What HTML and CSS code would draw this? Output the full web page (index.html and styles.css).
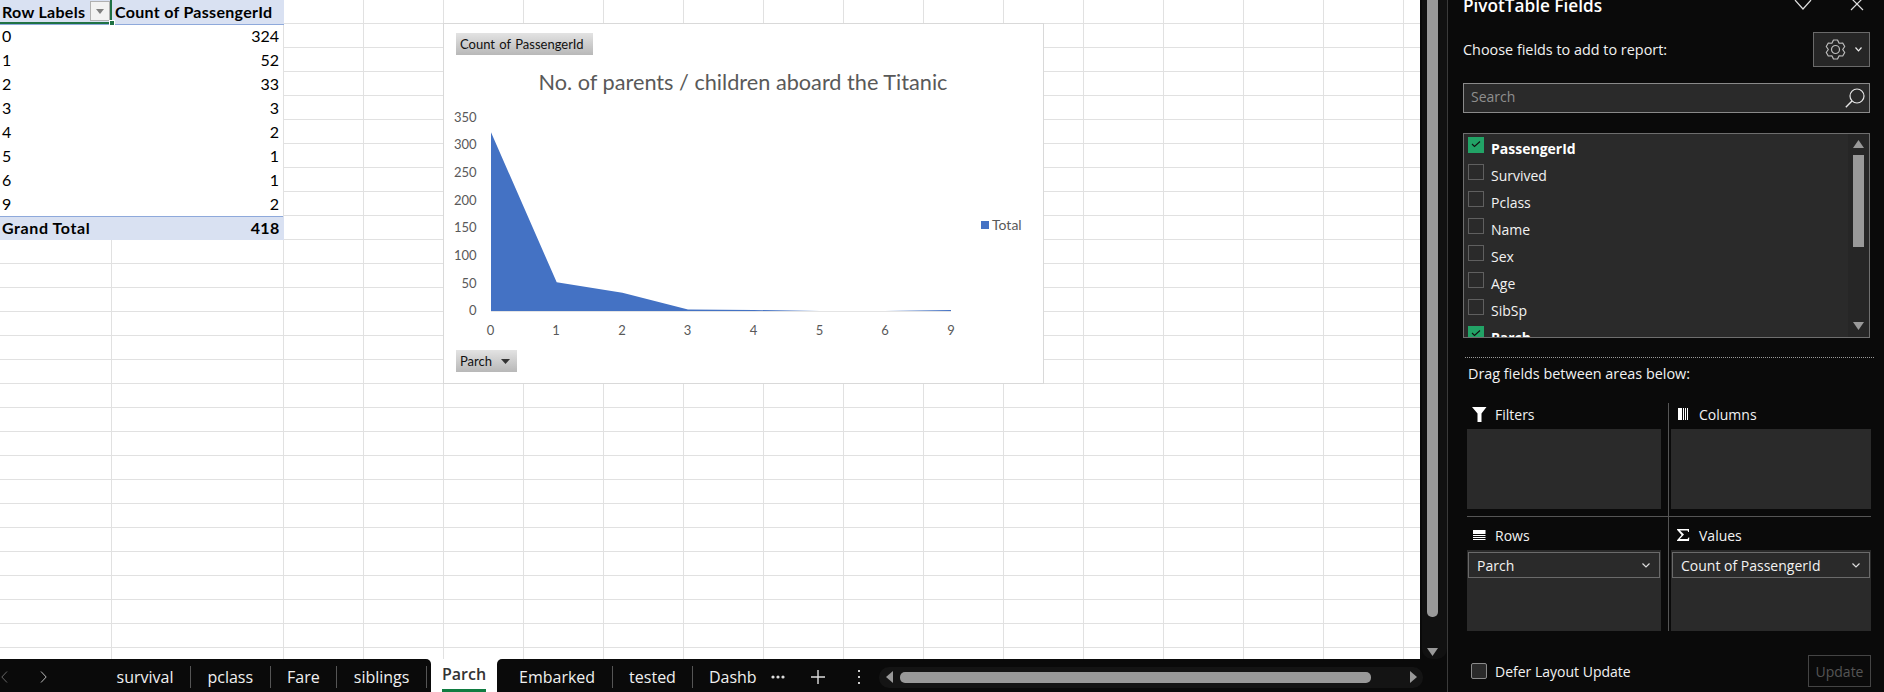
FILE: index.html
```html
<!DOCTYPE html>
<html lang="en">
<head>
<meta charset="utf-8">
<title>PivotTable - Parch</title>
<link rel="stylesheet" href="styles.css">
</head>
<body>
<div class="app">
  <div class="main">
    <div class="work">
      <div class="sheet">
        <table class="pivot">
          <tr class="head"><th class="c1">Row Labels<span class="filter"><svg width="8" height="5" viewBox="0 0 8 5"><path d="M0 0h8L4 5z" fill="#7f7f7f"/></svg></span><span class="handle"></span></th><th class="c2">Count of PassengerId</th></tr>
          <tr><td class="c1">0</td><td class="c2">324</td></tr>
          <tr><td class="c1">1</td><td class="c2">52</td></tr>
          <tr><td class="c1">2</td><td class="c2">33</td></tr>
          <tr><td class="c1">3</td><td class="c2">3</td></tr>
          <tr><td class="c1">4</td><td class="c2">2</td></tr>
          <tr><td class="c1">5</td><td class="c2">1</td></tr>
          <tr><td class="c1">6</td><td class="c2">1</td></tr>
          <tr><td class="c1">9</td><td class="c2">2</td></tr>
          <tr class="total"><td class="c1">Grand Total</td><td class="c2">418</td></tr>
        </table>
        <div class="chart">
          <span class="chip chip-count">Count of PassengerId</span>
          <svg class="plot" width="600" height="359" viewBox="0 0 600 359">
            <text class="title" x="299" y="66" text-anchor="middle">No. of parents / children aboard the Titanic</text>
            <g class="ylab" text-anchor="end">
              <text x="32.500" y="98">350</text><text x="32.500" y="125">300</text><text x="32.500" y="153">250</text><text x="32.500" y="181">200</text><text x="32.500" y="208">150</text><text x="32.500" y="236">100</text><text x="32.500" y="264">50</text><text x="32.500" y="291">0</text>
            </g>
            <path d="M47 287V108.300L112.700 258.300 178.400 268.800 244 285.600 309.800 286 375.500 287 441 287 507 285.900V287Z" fill="#4472c4"/>
            <path d="M47 287.500H507" stroke="#e4e4e4" fill="none"/>
            <g class="ylab" text-anchor="middle">
              <text x="46.500" y="311">0</text><text x="112" y="311">1</text><text x="178" y="311">2</text><text x="243.500" y="311">3</text><text x="309.500" y="311">4</text><text x="375.500" y="311">5</text><text x="441" y="311">6</text><text x="507" y="311">9</text>
            </g>
            <rect x="537" y="197" width="8" height="8" fill="#4472c4"/>
            <text class="ylab legend" x="548" y="206">Total</text>
          </svg>
          <span class="chip chip-parch">Parch<svg width="9" height="5" viewBox="0 0 9 5"><path d="M0 0h9L4.500 5z" fill="#333"/></svg></span>
        </div>
      </div>
      <div class="vscroll">
        <div class="vthumb"></div>
        <svg class="arrow-down" width="11" height="8" viewBox="0 0 11 8"><path d="M0 0h11L5.500 8z" fill="#999"/></svg>
      </div>
    </div>
    <div class="tabbar">
      <div class="seg seg-left">
        <div class="nav">
          <svg width="7" height="12" viewBox="0 0 7 12"><path d="M6 .5.800 6 6 11.500" fill="none" stroke="#666"/></svg>
          <svg width="7" height="12" viewBox="0 0 7 12"><path d="M1 .5 6.200 6 1 11.500" fill="none" stroke="#bbb"/></svg>
        </div>
        <span class="tab sep">survival</span>
        <span class="tab sep">pclass</span>
        <span class="tab sep">Fare</span>
        <span class="tab sep">siblings</span>
      </div>
      <div class="tab-active"><span class="active-label">Parch</span></div>
      <div class="seg seg-right">
        <span class="tab sep first">Embarked</span>
        <span class="tab sep">tested</span>
        <span class="tab clip">Dashb</span>
        <svg class="more" width="14" height="4" viewBox="0 0 14 4"><g fill="#ddd"><circle cx="2" cy="2" r="1.600"/><circle cx="7" cy="2" r="1.600"/><circle cx="12" cy="2" r="1.600"/></g></svg>
        <svg class="plus" width="16" height="16" viewBox="0 0 16 16"><path d="M8 1v14M1 8h14" stroke="#ddd" stroke-width="1.400" fill="none"/></svg>
        <svg class="kebab" width="4" height="16" viewBox="0 0 4 16"><g fill="#ccc"><rect x="1" y="1" width="2" height="2"/><rect x="1" y="7" width="2" height="2"/><rect x="1" y="13" width="2" height="2"/></g></svg>
        <div class="hscroll">
          <svg width="7" height="12" viewBox="0 0 7 12"><path d="M7 0v12L0 6z" fill="#999"/></svg>
          <div class="hthumb"></div>
          <svg class="hright" width="7" height="12" viewBox="0 0 7 12"><path d="M0 0v12l7-6z" fill="#999"/></svg>
        </div>
      </div>
    </div>
  </div>
  <aside class="panel">
    <div class="panel-head">
      <span class="panel-title">PivotTable Fields</span>
      <svg class="head-chev" width="18" height="10" viewBox="0 0 18 10"><path d="M1 0 9 9 17 0" fill="none" stroke="#ddd" stroke-width="1.200"/></svg>
      <svg class="head-x" width="14" height="12" viewBox="0 0 14 12"><path d="M1-1 13 11M13-1 1 11" fill="none" stroke="#ddd" stroke-width="1.200"/></svg>
    </div>
    <div class="choose">
      <span class="lead">Choose fields to add to report:</span>
      <div class="gear">
        <svg width="21" height="21" viewBox="0 0 21 21"><path d="M8.480 1.010H12.520L14.100 4.260 17.710 4.010 19.720 7.500 17.700 10.500 19.720 13.500 17.710 16.990 14.100 16.740 12.520 19.990H8.480L6.900 16.740 3.290 16.990 1.280 13.500 3.300 10.500 1.280 7.500 3.290 4.010 6.900 4.260Z" fill="none" stroke="#bdbdbd" stroke-width="1.200" stroke-linejoin="round"/><circle cx="10.500" cy="10.500" r="4" fill="none" stroke="#bdbdbd" stroke-width="1.200"/></svg>
        <svg width="7" height="5" viewBox="0 0 7 5"><path d="M.5.500 3.500 3.800 6.500.500" fill="none" stroke="#eee" stroke-width="1.200"/></svg>
      </div>
    </div>
    <div class="search">
      <span class="search-label">Search</span>
      <svg width="20" height="20" viewBox="0 0 20 20"><circle cx="12" cy="8" r="7" fill="none" stroke="#e6e6e6" stroke-width="1.200"/><path d="M7 13 .8 19.200" stroke="#e6e6e6" stroke-width="1.400" fill="none"/></svg>
    </div>
    <div class="fields">
      <div class="field-list">
        <div class="field on"><span class="box"><svg width="16" height="16" viewBox="0 0 16 16"><path d="M4 7l2.500 2.500L12 4.500" fill="none" stroke="#111" stroke-width="1.100"/></svg></span>PassengerId</div>
        <div class="field"><span class="box"></span>Survived</div>
        <div class="field"><span class="box"></span>Pclass</div>
        <div class="field"><span class="box"></span>Name</div>
        <div class="field"><span class="box"></span>Sex</div>
        <div class="field"><span class="box"></span>Age</div>
        <div class="field"><span class="box"></span>SibSp</div>
        <div class="field on"><span class="box"><svg width="16" height="16" viewBox="0 0 16 16"><path d="M4 7l2.500 2.500L12 4.500" fill="none" stroke="#111" stroke-width="1.100"/></svg></span>Parch</div>
      </div>
      <div class="list-scroll">
        <svg width="11" height="8" viewBox="0 0 11 8"><path d="M0 8h11L5.500 0z" fill="#999"/></svg>
        <div class="list-thumb"></div>
        <svg class="list-down" width="11" height="8" viewBox="0 0 11 8"><path d="M0 0h11L5.500 8z" fill="#999"/></svg>
      </div>
    </div>
    <div class="dotted"></div>
    <div class="drag lead">Drag fields between areas below:</div>
    <div class="areas">
      <div class="area a-filters">
        <div class="area-head"><svg width="15" height="15" viewBox="0 0 15 15"><path d="M0 0h14.500L9.500 6.500V15L5.500 15V6.500z" fill="#fff"/></svg>Filters</div>
        <div class="drop"></div>
      </div>
      <div class="area a-columns">
        <div class="area-head"><svg width="11" height="12" viewBox="0 0 11 12"><path d="M0 0h4v12H0zM5 0h1v12H5zM7 0h1v12H7zM9 0h1v12H9z" fill="#fff"/></svg>Columns</div>
        <div class="drop"></div>
      </div>
      <div class="area a-rows">
        <div class="area-head"><svg width="13" height="11" viewBox="0 0 13 11"><path d="M0 0h12.500v4H0zM0 5h12.500v1H0zM0 7h12.500v1H0zM0 9h12.500v1H0z" fill="#fff"/></svg>Rows</div>
        <div class="drop"><div class="pill">Parch<svg width="8" height="5" viewBox="0 0 8 5"><path d="M.5.500 4 4 7.500.500" fill="none" stroke="#ddd" stroke-width="1.200"/></svg></div></div>
      </div>
      <div class="area a-values">
        <div class="area-head"><svg width="13" height="12" viewBox="0 0 13 12"><path d="M0 0h12v3h-.8L10.500 1.500H3L7 5.500 2.800 10H10.500L11.500 8.400h.8L12 12H0V11.200L4.600 6 0 .8z" fill="#fff"/></svg>Values</div>
        <div class="drop"><div class="pill">Count of PassengerId<svg width="8" height="5" viewBox="0 0 8 5"><path d="M.5.500 4 4 7.500.500" fill="none" stroke="#ddd" stroke-width="1.200"/></svg></div></div>
      </div>
    </div>
    <div class="defer">
      <span class="box defer-box"></span><span>Defer Layout Update</span>
      <span class="update">Update</span>
    </div>
  </aside>
</div>
</body>
</html>
```
FILE: styles.css
```css
* { box-sizing: border-box; }
html, body { margin: 0; padding: 0; height: 692px; overflow: hidden; background: #0a0a0a; }
body { font-family: "Open Sans", "Noto Sans", sans-serif; }
.app { display: flex; width: 1884px; height: 692px; }
.main { width: 1448px; display: flex; flex-direction: column; border-right: 1px solid #3a3a3a; }
.work { display: flex; height: 659px; }
.sheet {
  position: relative; width: 1422px; height: 659px; background-color: #fff;
  background-image:
    repeating-linear-gradient(to bottom, transparent 0 23px, #e1e1e1 23px 24px),
    linear-gradient(to right, transparent 111px, #e1e1e1 111px 112px, transparent 112px),
    linear-gradient(to right, transparent 283px, #e1e1e1 283px 284px, transparent 284px),
    repeating-linear-gradient(to right, transparent 0 79px, #e1e1e1 79px 80px);
  background-position: 0 0, 0 0, 0 0, 284px 0;
  background-repeat: repeat, no-repeat, no-repeat, no-repeat;
}
.pivot { border-collapse: collapse; table-layout: fixed; width: 284px; font-family: "Lato", "Carlito", sans-serif; font-size: 16px; color: #000; background: #fff; }
.pivot th, .pivot td { height: 24px; padding: 0 3px 0 2px; line-height: 22px; }
.pivot .c1 { width: 112px; text-align: left; position: relative; }
.pivot .c2 { text-align: right; padding-right: 4px; }
.pivot th.c2 { text-align: left; padding-left: 3px; padding-right: 0; white-space: nowrap; }
.pivot td.c2 { border-right: 1px solid #e1e1e1; }
.head th, .total td { background: #d9e1f2; font-weight: 700; letter-spacing: .3px; }
.total .c1 { letter-spacing: .6px; }
.head th { border-bottom: 1px solid #8ea9db; }
.total td { border-top: 1px solid #8ea9db; border-right: 0 !important; }
.filter { position: absolute; left: 90px; top: 1px; width: 20px; height: 20px; background: #f2f2f2; border: 1px solid #b0b0b0; display: flex; align-items: center; justify-content: center; }
.head .c1 { box-shadow: inset 0 -2px 0 #1f7244, inset -2px 0 0 #1f7244; }
.handle { position: absolute; right: -3px; bottom: -2px; width: 6px; height: 6px; background: #1f7244; border: 1px solid #fff; }

.chart { position: absolute; left: 443px; top: 23px; width: 601px; height: 361px; background: #fff; border: 1px solid #d9d9d9; }
.plot { display: block; }
.plot text { font-family: "Lato", "Carlito", sans-serif; }
.title { font-size: 21.700px; fill: #595959; }
.ylab { font-size: 13px; fill: #595959; }
.legend { font-size: 14px; }
.chip { position: absolute; left: 12px; height: 22px; display: flex; align-items: center; gap: 9px; padding-left: 4px; font-family: "Lato", "Carlito", sans-serif; font-size: 13px; color: #111; background: linear-gradient(to bottom, #e3e3e3, #b8b8b8); white-space: nowrap; }
.chip-count { top: 9px; width: 137px; word-spacing: 1px; }
.chip-parch { top: 326px; width: 61px; }

.vscroll { position: relative; width: 25px; margin-left: 2px; background: #111; border-radius: 0 0 10px 10px; }
.vthumb { position: absolute; left: 5px; top: -6px; width: 11px; height: 623px; background: #999; border-radius: 5px; }
.arrow-down { position: absolute; left: 5px; top: 648px; }

.tabbar { display: flex; height: 33px; background: #fff; font-size: 16px; color: #f0f0f0; line-height: 1; }
.seg { background: #0a0a0a; display: flex; align-items: center; height: 33px; }
.seg-left { width: 431px; border-radius: 0 5px 0 0; padding-top: 3px; }
.seg-right { flex: 1; border-radius: 5px 0 0 0; padding-top: 3px; }
.nav { width: 100px; display: flex; gap: 32px; padding-left: 2px; align-items: center; margin-left: -1px; margin-right: 1px; flex: none; }
.tab { padding: 0 16.500px; white-space: nowrap; height: 22px; display: flex; align-items: center; }
.sep { border-right: 1px solid #555; }
.first { padding-left: 22px; }
.clip { width: 65px; overflow: hidden; padding-left: 15.500px; padding-right: 0; flex: none; }
.tab-active { width: 66px; height: 33px; display: flex; justify-content: center; }
.active-label { height: 33px; padding-top: 7px; width: 44px; text-align: center; color: #333; font-weight: 600; border-bottom: 3px solid #107c41; }
.more { margin-left: 13px; flex: none; }
.plus { margin-left: 25px; flex: none; }
.kebab { margin-left: 31px; flex: none; }
.hscroll { margin-left: 18px; width: 544px; height: 21px; background: #141414; border-radius: 10px; display: flex; align-items: center; padding: 0 6px 0 7px; gap: 7px; flex: none; }
.hthumb { width: 471px; height: 11px; background: #999; border-radius: 5px; }
.hright { margin-left: auto; }

.panel { flex: 1; color: #f2f2f2; font-size: 14px; padding-left: 15px; background: #0a0a0a; }
.lead { font-size: 14.400px; }
.panel-head { height: 12px; width: 401px; display: flex; align-items: center; }
.panel-title { font-size: 17.200px; font-weight: 600; line-height: 14px; color: #fff; white-space: nowrap; }
.head-chev { margin-left: auto; margin-top: -2px; margin-right: 1px; }
.head-x { margin-left: 37px; margin-top: -2px; }
.choose { display: flex; align-items: center; justify-content: space-between; width: 407px; margin-top: 20px; height: 35px; }
.gear { width: 57px; height: 35px; background: #262626; border: 1px solid #6a6a6a; display: flex; align-items: center; gap: 9px; padding-left: 11px; }
.search { width: 407px; height: 30px; margin-top: 16px; border: 1px solid #8a8a8a; background: #2a2a2a; color: #8f8f8f; display: flex; align-items: center; justify-content: space-between; padding: 0 4px 0 7px; }
.search-label { margin-top: -3px; }
.fields { width: 407px; height: 205px; margin-top: 20px; border: 1px solid #6e6e6e; background: #2a2a2a; display: flex; overflow: hidden; }
.field-list { flex: 1; padding: 3px 0 0 4px; overflow: hidden; }
.field { height: 27px; display: flex; align-items: flex-start; gap: 7px; line-height: 24px; }
.field.on { font-weight: 700; color: #fff; }
.box { width: 16px; height: 16px; border: 1px solid #5f5f5f; flex: none; display: block; }
.field.on .box { background: #22a366; border-color: #22a366; }
.box svg { display: block; margin: -1px; }
.list-scroll { width: 21px; background: #262626; position: relative; }
.list-scroll svg { position: absolute; left: 5px; top: 6px; }
.list-scroll .list-down { top: 188px; }
.list-thumb { position: absolute; left: 5px; top: 21px; width: 11px; height: 92px; background: #999; }
.dotted { width: 409px; margin: 19px 0 0 2px; border-top: 1px dotted #9a9a9a; }
.drag { margin: 6px 0 0 5px; height: 20px; line-height: 20px; }
.areas { display: grid; grid-template-columns: 202px 202px; grid-template-rows: 114px 114px; margin: 19px 0 0 4px; width: 404px; }
.area { display: flex; flex-direction: column; }
.a-filters, .a-rows { border-right: 1px solid #555; padding-right: 7px; }
.a-columns, .a-values { padding-left: 2px; }
.a-filters, .a-columns { border-bottom: 1px solid #555; }
.area-head { height: 26px; display: flex; align-items: center; padding-bottom: 4px; flex: none; }
.a-filters .area-head { gap: 8px; padding-left: 5px; }
.a-columns .area-head { gap: 10px; padding-left: 7px; }
.a-rows .area-head { gap: 9px; padding-left: 6px; }
.a-values .area-head { gap: 9px; padding-left: 6px; }
.a-filters .drop, .a-columns .drop { height: 80px; flex: none; }
.a-rows .area-head, .a-values .area-head { height: 33px; padding-top: 3px; padding-bottom: 0; }
.drop { background: #2a2a2a; flex: 1; padding: 2px 1px; }
.pill { height: 26px; border: 1px solid #6a6a6a; padding: 0 9px 0 8px; display: flex; align-items: center; justify-content: space-between; }
.defer { display: flex; align-items: center; width: 408px; margin-top: 24px; padding-left: 8px; height: 32px; gap: 8px; }
.defer-box { border-color: #8a8a8a; background: #2a2a2a; border-radius: 2px; }
.update { margin-left: auto; width: 63px; height: 32px; border: 1px solid #444; color: #555; display: flex; align-items: center; justify-content: center; }
```
